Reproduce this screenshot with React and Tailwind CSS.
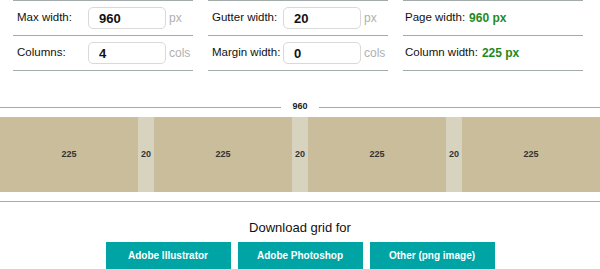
import React from "react";

const settings = [
    [
        { label: "Max width:", value: "960", unit: "px" },
        { label: "Columns:", value: "4", unit: "cols" },
    ],
    [
        { label: "Gutter width:", value: "20", unit: "px" },
        { label: "Margin width:", value: "0", unit: "cols" },
    ],
];

const results = [
    { label: "Page width:", value: "960 px" },
    { label: "Column width:", value: "225 px" },
];

function InputRow({ label, value, unit }) {
    return (
        <div className="h-[35px] border-b border-[#a3abab] flex items-center pl-[4px]">
            <div className="w-[71px] shrink-0 whitespace-nowrap text-[11.5px] text-[#111]">{label}</div>
            <input
                type="text"
                readOnly
                value={value}
                className="w-[78px] shrink-0 h-[22px] border border-[#d9d9d9] rounded-[5px] pl-[10px] text-[13px] font-bold text-[#111] outline-none bg-white"
            />
            <span className="ml-[3px] text-[12px] text-[#b0b0b0]">{unit}</span>
        </div>
    );
}

function Ruler() {
    return (
        <div className="mt-[30px] h-[12px] flex items-center">
            <div className="flex-1 h-px bg-[#a3abab]"></div>
            <div className="px-[11px] text-[9px] font-bold text-[#222]">960</div>
            <div className="flex-1 h-px bg-[#a3abab]"></div>
        </div>
    );
}

function GridPreview() {
    const cols = [225, 225, 225, 225];
    return (
        <div className="mt-[4px] h-[75px] flex">
            {cols.map((c, i) => (
                <React.Fragment key={i}>
                    {i > 0 && (
                        <div className="w-[16px] bg-[#d8d3bf] flex items-center justify-center text-[9px] font-bold text-[#333]">20</div>
                    )}
                    <div className="w-[138px] bg-[#c9bd9b] flex items-center justify-center text-[9px] font-bold text-[#333]">{c}</div>
                </React.Fragment>
            ))}
        </div>
    );
}

export default function App() {
    return (
        <div className="w-[600px] h-[269px] bg-white overflow-hidden" style={{ fontFamily: '"Liberation Sans", Arial, sans-serif' }}>
            <div className="flex gap-[15px] pl-[13px]">
                {settings.map((col, i) => (
                    <div key={i} className="w-[180px] border-t border-[#a3abab]">
                        {col.map(row => <InputRow key={row.label} {...row} />)}
                    </div>
                ))}
                <div className="w-[180px] border-t border-[#a3abab]">
                    {results.map(r => (
                        <div key={r.label} className="h-[35px] border-b border-[#a3abab] flex items-center pl-[2px] whitespace-nowrap">
                            <span className="text-[11.5px] text-[#111]">{r.label}</span>
                            <span className="ml-[4px] text-[12px] font-bold text-[#1f8a1f]">{r.value}</span>
                        </div>
                    ))}
                </div>
            </div>

            <Ruler />
            <GridPreview />

            <div className="mt-[9px] h-px bg-[#a3abab]"></div>

            <div className="mt-[18px] text-center text-[13px] leading-[16px] text-[#111]">Download grid for</div>
            <div className="mt-[6px] flex justify-center gap-[7px]">
                <button className="w-[125px] h-[27px] bg-[#00a4a4] text-white text-[10px] font-bold">Adobe Illustrator</button>
                <button className="w-[125px] h-[27px] bg-[#00a4a4] text-white text-[10px] font-bold">Adobe Photoshop</button>
                <button className="w-[125px] h-[27px] bg-[#00a4a4] text-white text-[10px] font-bold">Other (png image)</button>
            </div>
        </div>
    );
}
